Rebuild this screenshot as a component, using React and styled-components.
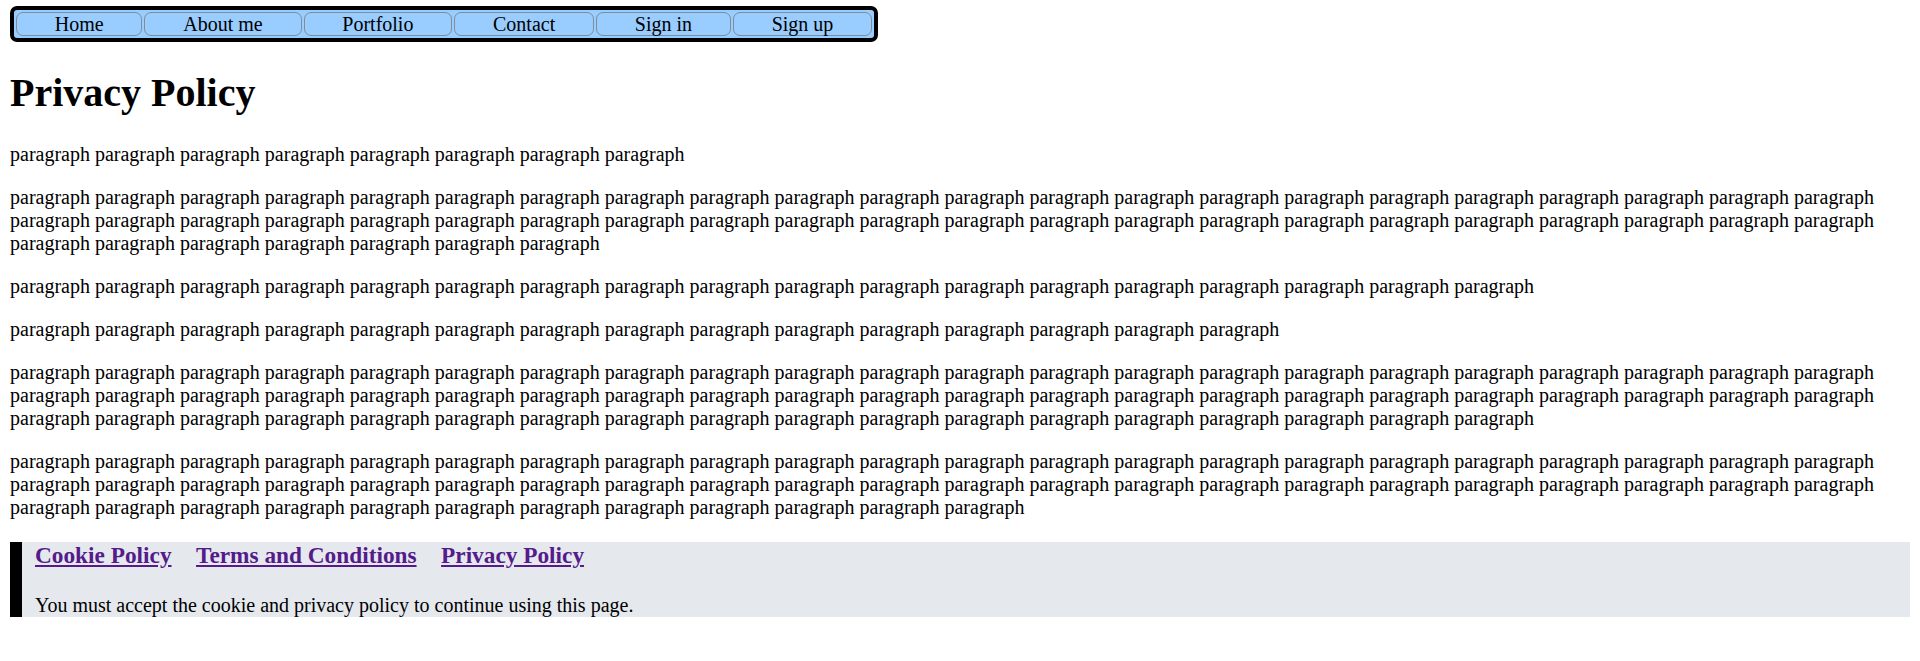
import styled, { createGlobalStyle } from "styled-components";

const GlobalStyle = createGlobalStyle`
  html, body {
    margin: 0;
    padding: 0;
    background: #ffffff;
  }
  body {
    font-family: "Liberation Serif", "Times New Roman", serif;
    font-size: 20px;
    color: #000000;
  }
`;

const links = ["Home", "About me", "Portfolio", "Contact", "Sign in", "Sign up"];

const paragraphs = [8, 51, 18, 15, 62, 56];

const words = (n) => Array(n).fill("paragraph").join(" ");

export default function App() {
  return (
    <Page>
      <GlobalStyle />
      <Nav>
        {links.map((label) => (
          <NavButton key={label}>{label}</NavButton>
        ))}
      </Nav>

      <Title>Privacy Policy</Title>

      {paragraphs.map((count, i) => (
        <Text key={i}>{words(count)}</Text>
      ))}

      <Footer>
        <FooterLinks>
          <a href="#cookie">Cookie Policy</a>
          <a href="#terms">Terms and Conditions</a>
          <a href="#privacy">Privacy Policy</a>
        </FooterLinks>
        <Notice>You must accept the cookie and privacy policy to continue using this page.</Notice>
      </Footer>
    </Page>
  );
}

const Page = styled.div`
  padding: 6px 10px 10px;
`;

const Nav = styled.nav`
  display: inline-flex;
  gap: 2px;
  padding: 2px;
  background: #99ccff;
  border: 4px solid #000000;
  border-radius: 7px;
`;

const NavButton = styled.button`
  height: 24px;
  padding: 0 37.8px;
  font-family: inherit;
  font-size: 20px;
  line-height: 22px;
  color: #000000;
  background: #99ccff;
  border: 1px solid #7f8c99;
  border-radius: 7px;
  cursor: pointer;
`;

const Title = styled.h1`
  font-size: 40px;
  font-weight: bold;
  margin: 27px 0;
`;

const Text = styled.p`
  margin: 20px 0;
  font-size: 20px;
`;

const Footer = styled.footer`
  margin-top: 23px;
  padding-left: 13px;
  background: #e5e9ee;
  border-left: 12px solid #000000;
`;

const FooterLinks = styled.h3`
  display: flex;
  gap: 24.5px;
  margin: 0 0 25px;
  font-size: 23.3px;
  font-weight: bold;
  a {
    color: #551a8b;
    text-decoration: underline;
  }
`;

const Notice = styled.p`
  margin: 0;
  font-size: 20px;
`;
